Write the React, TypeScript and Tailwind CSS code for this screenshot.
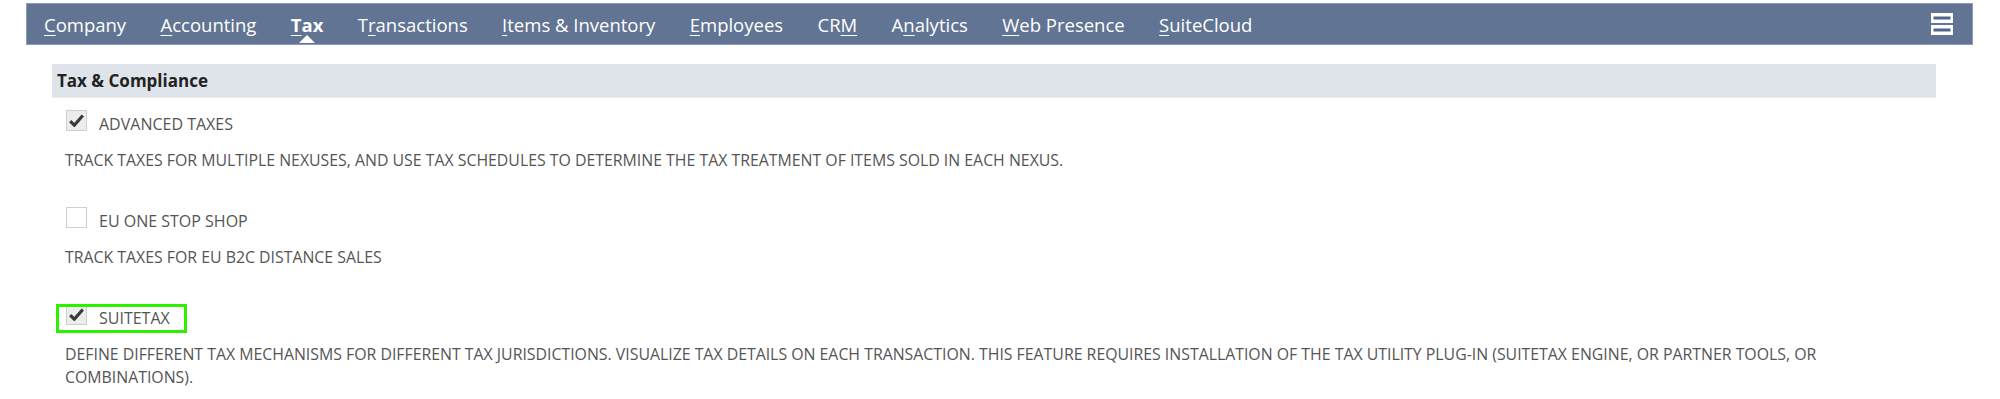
import React from "react";

const navItems: { pre: string; u: string; post: string; bold?: boolean }[] = [
  { pre: "", u: "C", post: "ompany" },
  { pre: "", u: "A", post: "ccounting" },
  { pre: "", u: "T", post: "ax", bold: true },
  { pre: "T", u: "r", post: "ansactions" },
  { pre: "", u: "I", post: "tems & Inventory" },
  { pre: "", u: "E", post: "mployees" },
  { pre: "CR", u: "M", post: "" },
  { pre: "A", u: "n", post: "alytics" },
  { pre: "", u: "W", post: "eb Presence" },
  { pre: "", u: "S", post: "uiteCloud" },
];

function Checkbox({ checked }: { checked: boolean }) {
  return (
    <div
      className={
        "w-[21px] h-[21px] shrink-0 border flex items-center justify-center " +
        (checked ? "bg-[#ececec] border-[#cfcfcf]" : "bg-white border-[#cfcfcf]")
      }
    >
      {checked && (
        <svg width="15" height="13" viewBox="0 0 15 13">
          <path d="M1.2 7.2 L5.3 11.2 L13.8 1.5" fill="none" stroke="#3a3a3a" strokeWidth="3.2" strokeLinejoin="miter" />
        </svg>
      )}
    </div>
  );
}

function Feature({
  checked,
  label,
  desc,
  highlight,
}: {
  checked: boolean;
  label: string;
  desc: string;
  highlight?: boolean;
}) {
  return (
    <div className="flex flex-col">
      <div className="relative flex items-start ml-[66px]">
        <Checkbox checked={checked} />
        <span className="ml-[12px] mt-[4px] text-[16px] leading-[21px] text-[#555555]">{label}</span>
        {highlight && (
          <div className="absolute left-[-10px] top-[0px] w-[131px] h-[29px] border-[3px] border-[#2cf000]" />
        )}
      </div>
      <div className="ml-[65px] mt-[14px] w-[1830px] text-[15.85px] leading-[23px] text-[#555555]">{desc}</div>
    </div>
  );
}

export default function App() {
  return (
    <div className="w-[2000px] h-[399px] bg-white overflow-hidden" style={{ fontFamily: '"Open Sans", sans-serif' }}>
      <div className="pt-[3px] px-[26px] pr-[27px]">
        <div className="relative h-[42px] bg-[#617493] border border-[#8e9db7] flex items-center pl-[17px] pr-[19px]">
          <div className="flex items-center gap-[34.4px] text-[18.5px] text-white leading-none pt-[2px]">
            {navItems.map((it, i) => (
              <span key={i} className={"relative whitespace-pre " + (it.bold ? "font-bold" : "")}>
                {it.pre}
                <span className="underline underline-offset-[3px] decoration-1">{it.u}</span>
                {it.post}
                {it.bold && (
                  <span className="absolute left-1/2 -translate-x-1/2 top-[19px] w-0 h-0 border-l-[8px] border-r-[8px] border-b-[8px] border-l-transparent border-r-transparent border-b-white" />
                )}
              </span>
            ))}
          </div>
          <div className="ml-auto flex flex-col gap-[2px]">
            <svg width="22" height="10" viewBox="0 0 22 10">
              <rect x="0" y="0" width="22" height="10" fill="#ffffff" />
              <rect x="2.5" y="3.5" width="17" height="3" fill="#51648a" />
            </svg>
            <svg width="22" height="10" viewBox="0 0 22 10">
              <rect x="0" y="0" width="22" height="10" fill="#ffffff" />
              <rect x="2.5" y="3.5" width="17" height="3" fill="#51648a" />
            </svg>
          </div>
        </div>
      </div>

      <div className="mt-[19px] ml-[52px] w-[1884px] h-[34px] bg-[#dfe3ea] border-b border-[#e9ecf0] flex items-center pl-[5px]">
        <span className="text-[17px] font-bold text-[#222222]">Tax &amp; Compliance</span>
      </div>

      <div className="mt-[12px] flex flex-col gap-[35px]">
        <Feature
          checked
          label="ADVANCED TAXES"
          desc="TRACK TAXES FOR MULTIPLE NEXUSES, AND USE TAX SCHEDULES TO DETERMINE THE TAX TREATMENT OF ITEMS SOLD IN EACH NEXUS."
        />
        <Feature checked={false} label="EU ONE STOP SHOP" desc="TRACK TAXES FOR EU B2C DISTANCE SALES" />
        <Feature
          checked
          highlight
          label="SUITETAX"
          desc="DEFINE DIFFERENT TAX MECHANISMS FOR DIFFERENT TAX JURISDICTIONS. VISUALIZE TAX DETAILS ON EACH TRANSACTION. THIS FEATURE REQUIRES INSTALLATION OF THE TAX UTILITY PLUG-IN (SUITETAX ENGINE, OR PARTNER TOOLS, OR COMBINATIONS)."
        />
      </div>
    </div>
  );
}
